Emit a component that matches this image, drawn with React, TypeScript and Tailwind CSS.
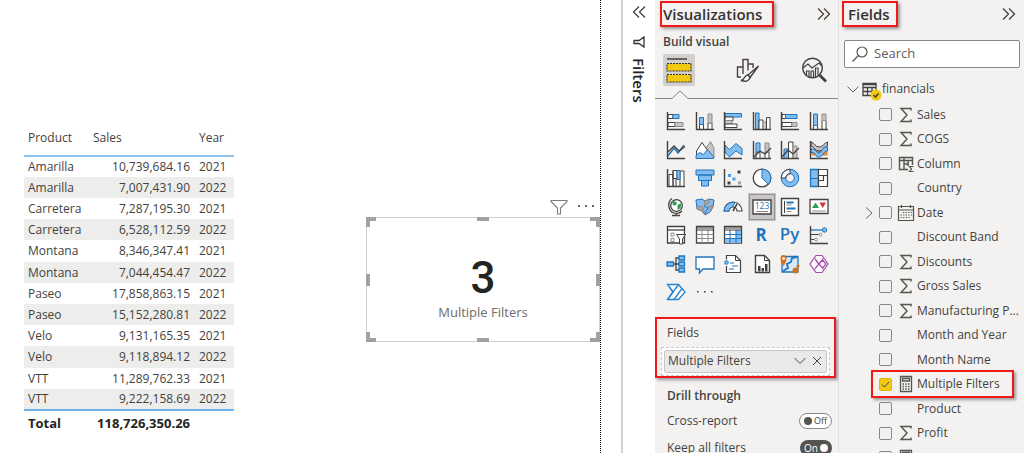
import type { ReactNode } from "react"

const DARK = "#444240"
const BLUE = "#1f75bd"
const SKY = "#83bdf0"
const GREY = "#c6c4c2"
const MID = "#8f8d8b"

const salesRows = [
  ["Amarilla", "10,739,684.16", "2021"],
  ["Amarilla", "7,007,431.90", "2022"],
  ["Carretera", "7,287,195.30", "2021"],
  ["Carretera", "6,528,112.59", "2022"],
  ["Montana", "8,346,347.41", "2021"],
  ["Montana", "7,044,454.47", "2022"],
  ["Paseo", "17,858,863.15", "2021"],
  ["Paseo", "15,152,280.81", "2022"],
  ["Velo", "9,131,165.35", "2021"],
  ["Velo", "9,118,894.12", "2022"],
  ["VTT", "11,289,762.33", "2021"],
  ["VTT", "9,222,158.69", "2022"],
]

type Kind = "sum" | "column" | "date" | "measure" | ""

const fields: { name: string; kind: Kind; checked?: boolean }[] = [
  { name: "Sales", kind: "sum" },
  { name: "COGS", kind: "sum" },
  { name: "Column", kind: "column" },
  { name: "Country", kind: "" },
  { name: "Date", kind: "date" },
  { name: "Discount Band", kind: "" },
  { name: "Discounts", kind: "sum" },
  { name: "Gross Sales", kind: "sum" },
  { name: "Manufacturing P...", kind: "sum" },
  { name: "Month and Year", kind: "" },
  { name: "Month Name", kind: "" },
  { name: "Multiple Filters", kind: "measure", checked: true },
  { name: "Product", kind: "" },
  { name: "Profit", kind: "sum" },
  { name: "", kind: "measure" },
]

const Axes = () => <path d="M1.5 1v17.5H19" stroke={DARK} strokeWidth="1.4" />

// each drawing lives in a 20x20 box
const visuals: { name: string; art: ReactNode }[] = [
  {
    name: "Stacked bar chart",
    art: (
      <>
        <path d="M2 3.5h5v4H2zM2 11.5h7v4H2z" fill="#fff" stroke={DARK} />
        <path d="M7 3.5h6v4H7z" fill={SKY} stroke={BLUE} />
        <path d="M9 11.5h8v4H9z" fill={GREY} stroke={MID} />
        <Axes />
      </>
    ),
  },
  {
    name: "Stacked column chart",
    art: (
      <>
        <path d="M4.500 13.500h4v5h-4zM13 12h4v6.500h-4z" fill="#fff" stroke={DARK} />
        <path d="M4.500 6.500h4v7h-4z" fill={SKY} stroke={BLUE} />
        <path d="M13 3h4v9h-4z" fill={GREY} stroke={MID} />
        <Axes />
      </>
    ),
  },
  {
    name: "Clustered bar chart",
    art: (
      <>
        <path d="M2 2.500h16.500v3.500H2z" fill={SKY} stroke={BLUE} />
        <path d="M2 6h8v3.500H2z" fill="#fff" stroke={DARK} />
        <path d="M2 9.500h7V13H2z" fill={GREY} stroke={MID} />
        <path d="M2 13h12v3.500H2z" fill="#fff" stroke={DARK} />
        <Axes />
      </>
    ),
  },
  {
    name: "Clustered column chart",
    art: (
      <>
        <path d="M3.500 2h3.500v16.500H3.500z" fill={SKY} stroke={BLUE} />
        <path d="M7 9h4v9.500H7z" fill="#fff" stroke={DARK} />
        <path d="M11 11h3.500v7.500H11z" fill={GREY} stroke={MID} />
        <path d="M14.500 6.500H18v12h-3.500z" fill="#fff" stroke={DARK} />
        <Axes />
      </>
    ),
  },
  {
    name: "100% stacked bar chart",
    art: (
      <>
        <path d="M2 3.500h3.500v4H2zM2 11.500h10v4H2z" fill="#fff" stroke={DARK} />
        <path d="M5.500 3.500H17v4H5.500z" fill={SKY} stroke={BLUE} />
        <path d="M12 11.500h5v4h-5z" fill={GREY} stroke={MID} />
        <Axes />
      </>
    ),
  },
  {
    name: "100% stacked column chart",
    art: (
      <>
        <path d="M4.500 14.500h4v4h-4zM13 9.500h4v9h-4z" fill="#fff" stroke={DARK} />
        <path d="M4.500 3h4v11.500h-4z" fill={SKY} stroke={BLUE} />
        <path d="M13 3h4v6.500h-4z" fill={GREY} stroke={MID} />
        <Axes />
      </>
    ),
  },
  {
    name: "Line chart",
    art: (
      <>
        <path d="M2 16l6-8 4 5 6-8" stroke={BLUE} strokeWidth="1.4" />
        <path d="M2 12l6-6 5 5 6-4.500" stroke={DARK} strokeWidth="1.4" />
        <Axes />
      </>
    ),
  },
  {
    name: "Area chart",
    art: (
      <>
        <path d="M11 8l4.500-6.500L19 8v10h-8z" fill={GREY} stroke={MID} />
        <path d="M1.500 11L7 2.500 13 11v7.500H1.500z" fill="#fff" stroke={DARK} />
        <path d="M1 18.500v-3l3.500-3 4 2 4-5 6 7v2z" fill={SKY} stroke={BLUE} />
      </>
    ),
  },
  {
    name: "Stacked area chart",
    art: (
      <>
        <path d="M2 5l4.500 4.500L13 3.500l6 5V15l-6-4-6.500 6L2 12z" fill={SKY} stroke={BLUE} />
        <Axes />
      </>
    ),
  },
  {
    name: "Line and stacked column chart",
    art: (
      <>
        <path d="M4 12h4v6.500H4zM13 12h4v6.500h-4z" fill="#fff" stroke={DARK} />
        <path d="M4 3h4v9H4z" fill={SKY} stroke={BLUE} />
        <path d="M13 3h4v9h-4z" fill={GREY} stroke={MID} />
        <path d="M2 17l6-6 5 3 6-6" stroke={DARK} strokeWidth="1.300" />
        <Axes />
      </>
    ),
  },
  {
    name: "Line and clustered column chart",
    art: (
      <>
        <path d="M4 9h4.500v9.500H4z" fill={SKY} stroke={BLUE} />
        <path d="M8.500 2H13v16.500H8.500z" fill="#fff" stroke={DARK} />
        <path d="M13 6h4v12.500h-4z" fill={GREY} stroke={MID} />
        <path d="M2 17l6-7 5 4 6-6" stroke={DARK} strokeWidth="1.300" />
        <Axes />
      </>
    ),
  },
  {
    name: "Ribbon chart",
    art: (
      <>
        <path d="M2.500 9.500h16v6h-16z" fill="#e8872e" />
        <path d="M2 2c4 1 4 5 8 5s5-4 8.500-5v4c-3.500 1-4 5-8.500 5S6 7 2 6z" fill={GREY} stroke={DARK} />
        <path d="M2 9h3c2 0 2 4 5 4s3-6 6-6h2.500v4H17c-2 0-3 6-7 6s-4-4.500-6-4.500H2z" fill={SKY} stroke={BLUE} />
        <Axes />
      </>
    ),
  },
  {
    name: "Waterfall chart",
    art: (
      <>
        <path d="M3 6.500h4v12H3zM7 2.500h4v8H7zM14 3h4v15.500h-4z" fill="#fff" stroke={DARK} />
        <path d="M11 2.500h3v9h-3z" fill={SKY} stroke={BLUE} />
        <path d="M7 2.500v16M10 10v8" stroke={DARK} />
        <Axes />
      </>
    ),
  },
  {
    name: "Funnel chart",
    art: (
      <g fill={SKY} stroke={BLUE}>
        <path d="M1 2h18v5H1zM3.500 7h13v5.500h-13zM6.500 12.500h7v5.500h-7z" />
      </g>
    ),
  },
  {
    name: "Scatter chart",
    art: (
      <>
        <path d="M14.500 2.500h3v3h-3zM4.500 13.500h3v3h-3z" fill={DARK} />
        <path d="M5 6h3v3H5zM9.500 9.500h3v3h-3z" fill="#4a9be0" />
        <path d="M15 13.500h3v3h-3z" fill="#a5a3a1" />
        <Axes />
      </>
    ),
  },
  {
    name: "Pie chart",
    art: (
      <>
        <circle cx="10" cy="10" r="8.800" fill="#fff" stroke={DARK} strokeWidth="1.300" />
        <path d="M10 1.200a8.800 8.800 0 0 1 6.200 15L10 10z" fill={SKY} stroke={BLUE} />
      </>
    ),
  },
  {
    name: "Donut chart",
    art: (
      <>
        <circle cx="10" cy="10" r="6.500" stroke={SKY} strokeWidth="4.500" />
        <path d="M10 3.500A6.500 6.500 0 0 0 3.500 10" stroke="#fff" strokeWidth="4" />
        <circle cx="10" cy="10" r="8.800" stroke={BLUE} />
        <circle cx="10" cy="10" r="4.200" stroke={BLUE} />
        <path d="M10 1.200A8.800 8.800 0 0 0 1.200 10h4.600A4.200 4.200 0 0 1 10 5.800z" stroke={DARK} />
      </>
    ),
  },
  {
    name: "Treemap",
    art: (
      <>
        <path d="M1.500 1.500h8v17h-8z" fill={SKY} stroke={BLUE} strokeWidth="1.300" />
        <path d="M1.500 10.500h8" stroke={BLUE} />
        <path d="M9.500 1.500h9v6h-9zM9.500 7.500h5v5h-5zM14.500 7.500h4v11h-9v-6h5z" fill="#fff" stroke={DARK} strokeWidth="1.200" />
      </>
    ),
  },
  {
    name: "Map",
    art: (
      <>
        <circle cx="10.500" cy="8.500" r="5.800" fill="#fff" stroke={DARK} strokeWidth="1.300" />
        <path d="M6.500 5c3-2 5 0 4 2s-3 2-4 0zM11.500 8l4-2-1 5-3 2z" fill="#2f9e55" />
        <path d="M6 1.500C1 5 2 14 8 16c3 1 6 0 8-2M10 16v2M6 18.500h8" stroke={DARK} strokeWidth="1.300" />
      </>
    ),
  },
  {
    name: "Filled map",
    art: (
      <>
        <path d="M1 3l6-1 3 2 4-2 5 1-1 7-3 5-5 3-3-4-5-2z" fill={SKY} stroke={BLUE} />
        <path d="M10 4l4-2v4l-5 3zM2 9l6 1 2 8-3-4-5-2zM13 10l5-2-2 6z" fill="#a5a3a1" stroke={MID} />
        <path d="M9 9l4 2-3 6" stroke={BLUE} />
      </>
    ),
  },
  {
    name: "Gauge",
    art: (
      <>
        <path d="M1 14a9 9 0 0 1 18 0h-5a4 4 0 0 0-8 0z" fill="#fff" stroke={DARK} strokeWidth="1.200" />
        <path d="M1 14a9 9 0 0 1 11-8.500L9.500 10A4 4 0 0 0 6 14z" fill={SKY} stroke={BLUE} />
        <path d="M10 14l4-7" stroke={DARK} strokeWidth="1.600" />
      </>
    ),
  },
  {
    name: "Card",
    art: (
      <>
        <path d="M1 3h18v14H1z" fill="#fff" stroke={DARK} strokeWidth="1.400" />
        <text x="10" y="12" textAnchor="middle" fontSize="8.500" fill={BLUE} fontFamily="Open Sans, sans-serif">
          123
        </text>
        <path d="M4 14.500h12" stroke={MID} />
      </>
    ),
  },
  {
    name: "Multi-row card",
    art: (
      <>
        <path d="M1.500 1.500h17v17h-17z" fill="#fff" stroke={DARK} strokeWidth="1.400" />
        <path d="M4.500 4v12" stroke={DARK} />
        <path d="M6.500 5.500h7M6.500 11.500h9" stroke={BLUE} strokeWidth="1.800" />
        <path d="M6.500 8h5M6.500 14.500h5" stroke={MID} />
      </>
    ),
  },
  {
    name: "KPI",
    art: (
      <>
        <path d="M1 2.500h18v14H1z" fill="#fff" stroke={DARK} strokeWidth="1.300" />
        <path d="M3 11l3.500-5.500L10 11z" fill="#2f9e55" />
        <path d="M10.500 5.500H17L13.700 11z" fill="#d13438" />
        <path d="M3 14h14" stroke={MID} />
      </>
    ),
  },
  {
    name: "Slicer",
    art: (
      <>
        <path d="M1.500 1.500h17V18h-17z" fill="#fff" stroke={DARK} strokeWidth="1.300" />
        <path d="M1.500 5h17" stroke={DARK} strokeWidth="1.300" />
        <path d="M5 8h3v3H5zM5 13.500h3v3H5z" stroke={MID} />
        <path d="M10.500 9.500h9l-3 4.500v5h-3v-5z" fill="#fff" stroke={DARK} />
      </>
    ),
  },
  {
    name: "Table",
    art: (
      <>
        <path d="M1.500 1.500h17V18h-17z" fill="#fff" stroke={DARK} strokeWidth="1.300" />
        <path d="M1.500 9.500h17M1.500 13.500h17M7 5v13M13 5v13" stroke={MID} />
        <path d="M1.500 3h17M1.500 5h17" stroke={DARK} />
      </>
    ),
  },
  {
    name: "Matrix",
    art: (
      <>
        <path d="M1.500 1.500h17V18h-17z" fill="#fff" stroke={DARK} strokeWidth="1.300" />
        <path d="M13 5h5v13H2v-4.500h11z" fill={SKY} />
        <path d="M1.500 9.500h17M1.500 13.500h17M7 5v13M13 5v13" stroke={BLUE} />
        <path d="M1.500 3h17M1.500 5h17" stroke={DARK} />
      </>
    ),
  },
  {
    name: "R script visual",
    art: (
      <text x="9" y="16" textAnchor="middle" fontSize="17" fontWeight="700" fill={BLUE} fontFamily="Open Sans, sans-serif">
        R
      </text>
    ),
  },
  {
    name: "Python visual",
    art: (
      <text x="9.500" y="15" textAnchor="middle" fontSize="17" fontWeight="600" fill={BLUE} fontFamily="Open Sans, sans-serif">
        Py
      </text>
    ),
  },
  {
    name: "Key influencers",
    art: (
      <>
        <path d="M2 5h12" stroke={BLUE} strokeWidth="1.300" />
        <circle cx="15.500" cy="5" r="2.200" fill={SKY} stroke={BLUE} />
        <path d="M2 9.500h8M2 14.500h4" stroke={DARK} />
        <circle cx="11.500" cy="9.500" r="1.400" fill="#fff" stroke={MID} />
        <circle cx="7" cy="14.500" r="1.400" fill="#fff" stroke={MID} />
        <Axes />
      </>
    ),
  },
  {
    name: "Decomposition tree",
    art: (
      <>
        <path d="M7 10h6M13 4h-3v12h3" stroke={DARK} strokeWidth="1.300" />
        <path d="M1 8h6.500v4H1zM13 2h5.500v4H13zM13 8h5.500v4H13zM13 14h5.500v4H13z" fill={SKY} stroke={BLUE} strokeWidth="1.300" />
      </>
    ),
  },
  {
    name: "Q&A",
    art: <path d="M1 3h18v12H8l-3.500 4v-4H1z" fill="#fff" stroke={BLUE} strokeWidth="1.300" />,
  },
  {
    name: "Smart narrative",
    art: (
      <>
        <path d="M3.500 6V1.500h9l5 5v12h-14V11" fill="#fff" />
        <path d="M3.500 5.500v-4h9l5 5v12h-14V12" stroke={DARK} strokeWidth="1.200" />
        <path d="M12.500 1.500v5h5" stroke={DARK} />
        <circle cx="3.500" cy="8.500" r="1.800" fill={SKY} stroke={BLUE} />
        <path d="M7 9h4M9 12h6M6 15h5" stroke={BLUE} strokeWidth="1.200" />
      </>
    ),
  },
  {
    name: "Paginated report",
    art: (
      <>
        <path d="M3.500 1.500h9l5 5v12h-14z" fill="#fff" stroke={DARK} strokeWidth="1.400" />
        <path d="M12.500 1.500v5h5" stroke={DARK} />
        <path d="M6 12h2.500v5.500H6zM9.500 14H12v3.500H9.500zM13 10h2.500v7.500H13z" fill={DARK} />
      </>
    ),
  },
  {
    name: "ArcGIS map",
    art: (
      <>
        <path d="M2 2.500h16V18H2z" fill="#d6eafa" stroke={BLUE} strokeWidth="1.300" />
        <path d="M17 3l-5 1-1 4-4 2 1 4-5 3" stroke={BLUE} strokeWidth="1.800" />
        <path d="M3.500 12C-1 6 0 1 3.500 1S8 6 3.500 12z" fill="#d8720f" />
        <circle cx="3.700" cy="4.500" r="1.300" fill="#fff" />
        <circle cx="15.500" cy="16.500" r="3" fill="#d8720f" />
        <circle cx="18" cy="12" r="1.600" fill="#d8720f" />
      </>
    ),
  },
  {
    name: "Power Apps",
    art: (
      <g stroke="#a24bab" strokeWidth="1.200">
        <path d="M7 1.500h6L19 10l-6 8.500H7L1 10z" fill="#fff" />
        <path d="M5.500 4L14.500 15.500M14.500 4L5.500 15.500M10 10l3.500-4 3.500 4-3.500 4zM10 10L6.500 6M10 10l-3.500 4" />
      </g>
    ),
  },
  {
    name: "Power Automate",
    art: (
      <g stroke="#2583d0" strokeWidth="1.300">
        <path d="M1.500 2.500h11L19 10l-6.500 7.500h-11L7 10z" fill="#fff" />
        <path d="M12.500 2.500L1.500 17.500M16 6.500L8 17.500M7 10L3.500 5" />
      </g>
    ),
  },
  {
    name: "Get more visuals",
    art: (
      <g fill={DARK}>
        <path d="M2 9h1.600v1.600H2zM9 9h1.600v1.600H9zM16 9h1.600v1.600H16z" />
      </g>
    ),
  },
]

const Chevrons = ({ label, left }: { label: string; left?: boolean }) => (
  <button type="button" aria-label={label} className="block">
    <svg viewBox="0 0 14 12" fill="none" stroke="#444240" strokeWidth="1.3" className="h-3 w-3.5">
      <path d={left ? "M7 0.500L1.500 6 7 11.500M13 0.500L7.500 6 13 11.500" : "M1 0.500L6.500 6 1 11.500M7 0.500L12.500 6 7 11.500"} />
    </svg>
  </button>
)

const FieldIcon = ({ kind }: { kind: Kind }) => (
  <svg viewBox="0 0 18 18" fill="none" stroke="#55534f" className="h-[18px] w-[18px] shrink-0">
    {kind === "sum" && <path d="M14 4.500V2.500H4l6 6.500-6 6.500h10v-2" strokeWidth="1.400" />}
    {kind === "column" && (
      <>
        <path d="M11 14.500H2.500v-12h13V10M2.500 5.500h13M7 2.500v12M11 5.500V11M7 9h5" strokeWidth="1.400" />
        <path d="M16.500 11.500h-4l2 2.500-2 2.500h4" strokeWidth="1.200" />
      </>
    )}
    {kind === "date" && (
      <>
        <path d="M1.500 2.500h15v14h-15zM1.500 6h15M4.500 1v3M13.500 1v3" strokeWidth="1.200" />
        <path d="M6 8.500h9M3.500 11h11.500M3.500 13.500h9" strokeDasharray="1.300 1.300" strokeWidth="1.200" />
      </>
    )}
    {kind === "measure" && (
      <>
        <path d="M3.500 1.500h11v15h-11zM5.500 3.500h7v2.500h-7z" strokeWidth="1.300" />
        <path d="M5.500 9h7M5.500 11.500h7M5.500 14h7" strokeDasharray="1.500 1.200" strokeWidth="1.400" />
      </>
    )}
  </svg>
)

const SalesTable = () => (
  <table className="mt-[124px] w-[210px] table-fixed border-collapse self-start text-[12px] leading-4 text-[#444240]">
    <colgroup>
      <col className="w-16" />
      <col className="w-[107px]" />
      <col />
    </colgroup>
    <thead>
      <tr className="h-8 border-b-2 border-[#8fc4ee] text-left">
        <th className="pb-1 pl-1 font-normal">Product</th>
        <th className="pb-1 pl-[5px] font-normal">Sales</th>
        <th className="pb-1 pl-1 font-normal">Year</th>
      </tr>
    </thead>
    <tbody>
      {salesRows.map(([product, sales, year]) => (
        <tr key={product + year} className="h-[21px] even:bg-[#ededec] nth-[5n]:h-[22px]">
          <td className="pl-1">{product}</td>
          <td className="pr-[5px] text-right">{sales}</td>
          <td className="pl-1">{year}</td>
        </tr>
      ))}
    </tbody>
    <tfoot>
      <tr className="h-6 border-t-2 border-[#6cb2ec] text-[13px] font-bold text-[#252423]">
        <td className="pl-1">Total</td>
        <td className="pr-[5px] text-right">118,726,350.26</td>
        <td></td>
      </tr>
    </tfoot>
  </table>
)

const CardVisual = () => (
  <div className="mt-[199px] w-[234px] shrink-0 self-start">
    <div className="flex h-[18px] items-start justify-end gap-2.5 pr-1.5">
      <button type="button" aria-label="Filters on this visual">
        <svg viewBox="0 0 18 16" fill="none" stroke="#7f7d7b" strokeWidth="1.1" className="h-4 w-[18px]">
          <path d="M1 1.500h16v1L10.500 9v6h-3V9L1 2.500z" />
        </svg>
      </button>
      <button type="button" aria-label="More options">
        <svg viewBox="0 0 16 14" fill="#666462" className="h-3.5 w-4">
          <path d="M0 6h2v2H0zM7 6h2v2H7zM14 6h2v2h-2z" />
        </svg>
      </button>
    </div>
    <div className="relative flex h-[125px] flex-col items-center justify-center border border-[#d2d0ce] bg-white pt-4">
      <span className="font-[Roboto] text-[44px] leading-[48px] font-medium text-[#252423]">3</span>
      <span className="text-[13px] leading-5 text-[#6f6d6b]">Multiple Filters</span>
      <i className="absolute -top-px -left-px h-2.5 w-2.5 border-t-4 border-l-4 border-[#a3a19f]" />
      <i className="absolute -top-px -right-px h-2.5 w-2.5 border-t-4 border-r-4 border-[#a3a19f]" />
      <i className="absolute -bottom-px -left-px h-2.5 w-2.5 border-b-4 border-l-4 border-[#a3a19f]" />
      <i className="absolute -right-px -bottom-px h-2.5 w-2.5 border-r-4 border-b-4 border-[#a3a19f]" />
      <i className="absolute -top-px left-1/2 h-1 w-3 -translate-x-1/2 bg-[#a3a19f]" />
      <i className="absolute -bottom-px left-1/2 h-1 w-3 -translate-x-1/2 bg-[#a3a19f]" />
      <i className="absolute top-1/2 -left-px h-3 w-1 -translate-y-1/2 bg-[#a3a19f]" />
      <i className="absolute top-1/2 -right-px h-3 w-1 -translate-y-1/2 bg-[#a3a19f]" />
    </div>
  </div>
)

const FiltersStrip = () => (
  <aside className="flex w-[34px] shrink-0 flex-col items-center border-l-2 border-[#d2d0ce] bg-white pt-1.5">
    <Chevrons label="Expand filters" left />
    <svg viewBox="0 0 12 12" fill="none" stroke="#333" strokeWidth="1.300" className="mt-[18px] h-3 w-3">
      <path d="M11 1v10L6 7.500H1v-3h5z" />
    </svg>
    <h2 className="mt-2.5 text-[15px] leading-5 font-semibold text-[#252423] [writing-mode:vertical-rl]">Filters</h2>
  </aside>
)

const Toggle = ({ label, on }: { label: string; on?: boolean }) => (
  <label className="flex h-[27px] items-center justify-between pr-1.5 pl-3 text-[12px] text-[#444240]">
    {label}
    <input type="checkbox" role="switch" defaultChecked={on} className="sr-only" />
    {on ? (
      <span className="flex h-4 w-8 items-center justify-between rounded-full bg-[#55534f] px-1 text-[10px] text-white">
        On
        <i className="h-2 w-2 rounded-full bg-white" />
      </span>
    ) : (
      <span className="flex h-4 w-[33px] items-center justify-between rounded-full border border-[#8a8886] bg-white px-1 text-[9px]">
        <i className="h-2 w-2 shrink-0 rounded-full bg-[#55534f]" />
        Off
      </span>
    )}
  </label>
)

const Visualizations = () => (
  <aside className="flex w-[184px] shrink-0 flex-col border-r border-[#e1dfdd] bg-[#f3f2f1] *:shrink-0">
    <div className="flex items-start justify-between pt-px pr-[7px] pl-[5px]">
      <h2 className="flex h-[26px] items-center border-2 border-[#f01818] pr-2.5 pl-px text-[15px] font-semibold text-[#333130] shadow-[2px_2px_3px_#999]">
        Visualizations
      </h2>
      <div className="pt-[7px]">
        <Chevrons label="Collapse visualizations" />
      </div>
    </div>
    <h3 className="mt-[7px] pl-2 text-[12px] leading-4 font-semibold text-[#444240]">Build visual</h3>
    <div className="mt-1 flex items-center justify-between pr-[11px] pl-2">
      <button type="button" aria-label="Build visual" className="flex h-8 w-8 items-center justify-center rounded-xs bg-[#d2d0ce]">
        <svg viewBox="0 0 28 28" fill="none" className="h-7 w-7">
          <path d="M2 3h20" stroke={DARK} strokeWidth="1.500" />
          <path d="M2 7.500h24v7.500H2zM2 18.500h24V26H2z" fill="#f2c811" stroke="#333" strokeWidth="1.200" strokeDasharray="2 1" />
        </svg>
      </button>
      <button type="button" aria-label="Format visual">
        <svg viewBox="0 0 24 26" fill="none" stroke={DARK} strokeWidth="1.400" className="h-[26px] w-6">
          <path d="M5 20H1.500V10H7M7 17V2.500h5v11M12 7h5v4" />
          <path d="M22.500 9L12 18l2 2.500L22.500 9z" fill="#fff" />
          <path d="M12 18c-4 0-3 5-7 5.500 4 1.500 8 1 9-3z" fill="#fff" />
        </svg>
      </button>
      <button type="button" aria-label="Analytics">
        <svg viewBox="0 0 26 26" fill="none" stroke={DARK} strokeWidth="1.400" className="h-[26px] w-[26px]">
          <circle cx="11.500" cy="11" r="9.800" />
          <path d="M18.500 18l6.500 6.500" strokeWidth="2.800" />
          <path d="M2 11l5-4 4 4 7-5 3 3M5.500 18v-4h2.500v6M10 20v-6h2.500v6M14.500 20v-9H17v7.500" strokeWidth="1.200" />
        </svg>
      </button>
    </div>
    <div className="mt-1 flex items-end">
      <div className="w-4 border-b border-[#8a8886]" />
      <svg viewBox="0 0 18 9" fill="none" stroke="#8a8886" className="h-[9px] w-[18px]">
        <path d="M0 8.500h1L9 1l8 7.500h1" />
      </svg>
      <div className="flex-1 border-b border-[#8a8886]" />
    </div>
    <div className="mt-2 grid grid-cols-6 pr-[5px] pl-[7px]">
      {visuals.map((v) => (
        <button
          key={v.name}
          type="button"
          aria-label={v.name}
          className={`flex aspect-square items-center justify-center ${v.name === "Card" ? "bg-[#c8c6c4] outline -outline-offset-2 outline-[#979593]" : ""}`}
        >
          <svg viewBox="0 0 20 20" fill="none" className="h-5 w-5 overflow-visible">
            {v.art}
          </svg>
        </button>
      ))}
    </div>
    <section className="mt-2.5 mr-0.5 border-2 border-[#f01818] px-1 pt-1.5 shadow-[2px_2px_3px_#999]">
      <h3 className="pl-1.5 text-[12px] leading-4 text-[#444240]">Fields</h3>
      <div className="mt-1.5 border border-dashed border-[#c8c6c4] bg-white p-0.5">
        <div className="flex h-[23px] items-center rounded-xs border border-[#c8c6c4] bg-[#ebeae9] pr-1 pl-[3px] text-[12px] text-[#444240]">
          <span className="flex-1">Multiple Filters</span>
          <button type="button" aria-label="Field options" className="mr-1.5">
            <svg viewBox="0 0 12 10" fill="none" stroke={DARK} className="h-2.5 w-3">
              <path d="M0.500 2L6 7.500 11.500 2" />
            </svg>
          </button>
          <button type="button" aria-label="Remove field">
            <svg viewBox="0 0 10 10" fill="none" stroke={DARK} className="h-2.5 w-2.5">
              <path d="M1 1l8 8M9 1L1 9" />
            </svg>
          </button>
        </div>
      </div>
    </section>
    <h3 className="mt-1.5 pl-3 text-[12px] leading-6 font-semibold text-[#444240]">Drill through</h3>
    <Toggle label="Cross-report" />
    <Toggle label="Keep all filters" on />
  </aside>
)

const FieldsPane = () => (
  <aside className="flex w-[185px] shrink-0 flex-col bg-[#f3f2f1] *:shrink-0">
    <div className="flex items-start justify-between pt-px pr-2 pl-[3px]">
      <h2 className="flex h-[26px] items-center border-2 border-[#f01818] pr-1.5 pl-1 text-[15px] font-semibold text-[#333130] shadow-[2px_2px_3px_#999]">
        Fields
      </h2>
      <div className="pt-[7px]">
        <Chevrons label="Collapse fields" />
      </div>
    </div>
    <label className="mt-[13px] mr-1 ml-[5px] flex h-7 items-center gap-1.5 rounded-xs border border-[#8a8886] bg-white pl-[7px]">
      <svg viewBox="0 0 16 16" fill="none" stroke="#55534f" strokeWidth="1.200" className="h-4 w-4 shrink-0">
        <circle cx="10" cy="6" r="5" />
        <path d="M6.500 9.500L0.500 15.500" />
      </svg>
      <input type="search" placeholder="Search" aria-label="Search fields" className="w-full min-w-0 text-[13px] outline-none placeholder:text-[#605e5c]" />
    </label>
    <div className="mt-2 flex h-[26px] items-center pl-2">
      <button type="button" aria-label="Collapse financials">
        <svg viewBox="0 0 12 12" fill="none" stroke="#666462" className="h-3 w-3">
          <path d="M0.500 3.500L6 9l5.500-5.500" />
        </svg>
      </button>
      <svg viewBox="0 0 20 20" fill="none" stroke={DARK} className="mt-1 ml-[3px] h-5 w-5">
        <path d="M1 2.500h13v12H1zM1 3.500h13M1 6.500h13M1 10.500h13M5.500 6.500v8M10 6.500v8" strokeWidth="1.300" />
        <circle cx="14" cy="14" r="5.500" fill="#f2c811" stroke="none" />
        <path d="M11.500 14l2 2 3-3.500" stroke="#333" strokeWidth="1.300" />
      </svg>
      <span className="text-[12px] text-[#444240]">financials</span>
    </div>
    <ul>
      {fields.map((f) => (
        <li key={f.name} className="relative flex h-6 items-center odd:h-[25px]">
          <span className="flex w-10 shrink-0 items-center justify-end pr-1.5">
            {f.kind === "date" && (
              <button type="button" aria-label="Expand Date">
                <svg viewBox="0 0 8 12" fill="none" stroke="#666462" className="h-3 w-2">
                  <path d="M1 0.500L7 6 1 11.500" />
                </svg>
              </button>
            )}
          </span>
          <label className="flex flex-1 items-center text-[12px] leading-4 whitespace-nowrap text-[#444240]">
            <span className="relative mr-[5px] h-[13px] w-[13px] shrink-0">
              <input
                type="checkbox"
                defaultChecked={f.checked}
                className="peer block h-[13px] w-[13px] appearance-none rounded-xs border border-[#8a8886] checked:border-[#e0b80c] checked:bg-[#f2c811]"
              />
              <svg viewBox="0 0 13 13" fill="none" stroke="#444240" className="pointer-events-none absolute inset-0 hidden peer-checked:block">
                <path d="M3 6.500L5.500 9 10 4" />
              </svg>
            </span>
            <FieldIcon kind={f.kind} />
            <span className="ml-0.5">{f.name}</span>
          </label>
          {f.checked && (
            <span className="pointer-events-none absolute -top-0.5 right-2.5 -bottom-0.5 left-8 border-2 border-[#f01818] shadow-[2px_2px_3px_#999]" />
          )}
        </li>
      ))}
    </ul>
  </aside>
)

const App = () => {
  return (
    <div className="flex h-screen overflow-hidden bg-white font-['Open_Sans','Noto_Sans',sans-serif]">
      <main className="flex min-w-0 flex-1 pr-5">
        <div className="flex flex-1 justify-between border-r border-dotted border-black pl-6">
          <SalesTable />
          <CardVisual />
        </div>
      </main>
      <FiltersStrip />
      <Visualizations />
      <FieldsPane />
    </div>
  )
}

export default App
